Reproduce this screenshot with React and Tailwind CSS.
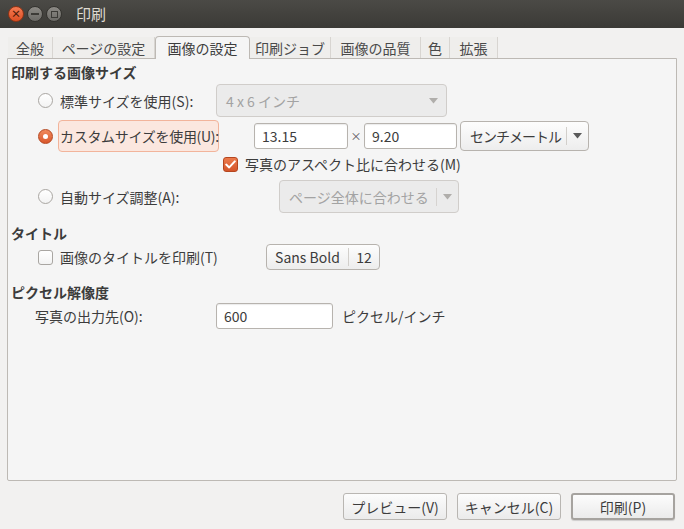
import React from 'react'

const Arrow = ({ dim }) => (
  <svg width="9" height="6" viewBox="0 0 9 6" className="shrink-0">
    <polygon points="0,0 9,0 4.5,5.5" fill={dim ? '#b0aeab' : '#5a5a5a'} />
  </svg>
)

const Radio = ({ checked }) =>
  checked ? (
    <div className="w-[15px] h-[15px] rounded-full border border-[#b5461f] bg-gradient-to-b from-[#f08a5d] to-[#d9572b] flex items-center justify-center shrink-0">
      <div className="w-[5px] h-[5px] rounded-full bg-white" />
    </div>
  ) : (
    <div className="w-[15px] h-[15px] rounded-full border border-[#a9a6a2] bg-gradient-to-b from-white to-[#f3f3f3] shrink-0" />
  )

const Check = ({ checked }) =>
  checked ? (
    <div className="w-[15px] h-[15px] rounded-[3px] border border-[#b5461f] bg-gradient-to-b from-[#ec7a4b] to-[#d4552a] flex items-center justify-center shrink-0">
      <svg width="11" height="9" viewBox="0 0 11 9">
        <path d="M1.2 4.6 L4.2 7.4 L9.8 1.4" stroke="white" strokeWidth="2" fill="none" strokeLinecap="round" strokeLinejoin="round" />
      </svg>
    </div>
  ) : (
    <div className="w-[15px] h-[15px] rounded-[3px] border border-[#a9a6a2] bg-gradient-to-b from-white to-[#f3f3f3] shrink-0" />
  )

const Entry = ({ value, w }) => (
  <div className={`${w} h-full bg-white border border-[#b7b3ae] rounded-[3px] shadow-[inset_0_1px_1px_rgba(0,0,0,0.08)] flex items-center px-[7px]`}>
    {value}
  </div>
)

const Button = ({ label, primary }) => (
  <div
    className={`w-[104px] h-[27px] rounded-[3px] flex items-center justify-center whitespace-nowrap bg-gradient-to-b from-[#fcfcfc] to-[#ebebeb] ${
      primary ? 'border-2 border-[#a6a39f] shadow-[0_1px_1px_rgba(0,0,0,0.15)]' : 'border border-[#b9b6b2]'
    }`}
  >
    {label}
  </div>
)

export default function App() {
  const tabs = [
    { label: '全般', w: 'w-[45px]' },
    { label: 'ページの設定', w: 'w-[102px]' },
    { label: '画像の設定', w: 'w-[95px]', active: true },
    { label: '印刷ジョブ', w: 'w-[81px]' },
    { label: '画像の品質', w: 'w-[90px]' },
    { label: '色', w: 'w-[29px]' },
    { label: '拡張', w: 'w-[48px]' }
  ]

  return (
    <div className="w-[684px] h-[529px] bg-[#f2f1f0] flex flex-col text-[14px] leading-[18px] text-[#3c3c3c] font-['Noto_Sans_CJK_JP',sans-serif] whitespace-nowrap overflow-hidden">
      {/* Title bar */}
      <div className="h-[28px] bg-gradient-to-b from-[#4b4a46] to-[#3b3a36] flex items-center pl-[8px] shrink-0">
        <div className="w-[16px] h-[16px] rounded-full bg-gradient-to-b from-[#f47a52] to-[#dc4f23] border border-[#8f3415] flex items-center justify-center text-[#4a1a08] text-[10px] leading-none font-bold">
          ×
        </div>
        <div className="ml-[3px] w-[16px] h-[16px] rounded-full bg-gradient-to-b from-[#8c8a85] to-[#6b6a66] border border-[#34332f] flex items-center justify-center">
          <div className="w-[8px] h-[2px] bg-[#3c3b37]" />
        </div>
        <div className="ml-[3px] w-[16px] h-[16px] rounded-full bg-gradient-to-b from-[#8c8a85] to-[#6b6a66] border border-[#34332f] flex items-center justify-center">
          <div className="w-[7px] h-[7px] border-[1.5px] border-[#3c3b37]" />
        </div>
        <span className="ml-[14px] text-[#dfdbd2] text-[15px]">印刷</span>
      </div>

      {/* Notebook */}
      <div className="px-[7px] pt-[7px] flex flex-col">
        <div className="flex items-end h-[23px] pl-[1px]">
          {tabs.map((t) =>
            t.active ? (
              <div
                key={t.label}
                className={`${t.w} h-[23px] -mb-px z-10 bg-[#f5f5f5] border border-b-0 border-[#bdb9b4] rounded-t-[4px] flex items-center justify-center`}
              >
                {t.label}
              </div>
            ) : (
              <div
                key={t.label}
                className={`${t.w} h-[21px] border-r border-[#d8d5d1] bg-[#efeeec] flex items-center justify-center text-[#4a4a4a]`}
              >
                {t.label}
              </div>
            )
          )}
        </div>
        <div className="h-[423px] border border-[#bdb9b4] bg-[#f5f5f5] rounded-b-[2px] flex flex-col pl-[3px]">
          {/* 印刷する画像サイズ */}
          <div className="mt-[3px] h-[20px] flex items-center font-bold">印刷する画像サイズ</div>

          <div className="h-[33px] mt-[2px] flex items-center">
            <div className="w-[27px]" />
            <Radio />
            <div className="w-[163px] pl-[7px]">標準サイズを使用(S):</div>
            <div className="w-[231px] h-full rounded-[4px] border border-[#d0cdca] bg-[#ebebeb] flex items-center pl-[9px] pr-[8px] text-[#a3a3a3]">
              <span className="flex-1">4 x 6 インチ</span>
              <Arrow dim />
            </div>
          </div>

          <div className="h-[32px] mt-[3px] flex items-center">
            <div className="w-[27px]" />
            <Radio checked />
            <div className="ml-[5px] w-[161px] h-[32px] rounded-[4px] border border-[#f2b49b] bg-[#fbe7df] flex items-center pl-[1px] tracking-[-0.3px]">
              カスタムサイズを使用(U):
            </div>
            <div className="ml-[35px] h-[26px] flex items-center">
              <Entry value="13.15" w="w-[94px]" />
              <span className="w-[16px] text-center text-[11px] text-[#555]">×</span>
              <Entry value="9.20" w="w-[93px]" />
            </div>
            <div className="ml-[3px] w-[129px] h-[30px] rounded-[4px] border border-[#b7b3ae] bg-gradient-to-b from-[#fdfdfd] to-[#ededed] flex items-center pl-[9px]">
              <span className="w-[96px] tracking-[-1px]">センチメートル</span>
              <div className="w-px h-[18px] bg-[#d2cfcb]" />
              <div className="flex-1 flex justify-center">
                <Arrow />
              </div>
            </div>
          </div>

          <div className="h-[18px] mt-[3px] flex items-center">
            <div className="w-[212px]" />
            <Check checked />
            <span className="ml-[7px]">写真のアスペクト比に合わせる(M)</span>
          </div>

          <div className="h-[33px] mt-[7px] flex items-center">
            <div className="w-[27px]" />
            <Radio />
            <div className="w-[226px] pl-[7px]">自動サイズ調整(A):</div>
            <div className="w-[180px] h-full rounded-[4px] border border-[#d0cdca] bg-[#ebebeb] flex items-center pl-[9px] text-[#a3a3a3]">
              <span className="w-[147px]">ページ全体に合わせる</span>
              <div className="w-px h-[18px] bg-[#d6d3d0]" />
              <div className="flex-1 flex justify-center">
                <Arrow dim />
              </div>
            </div>
          </div>

          {/* タイトル */}
          <div className="mt-[10px] h-[20px] flex items-center font-bold">タイトル</div>

          <div className="h-[26px] mt-[1px] flex items-center">
            <div className="w-[27px]" />
            <Check />
            <div className="w-[213px] pl-[7px]">画像のタイトルを印刷(T)</div>
            <div className="w-[114px] h-full rounded-[4px] border border-[#b7b3ae] bg-gradient-to-b from-[#fdfdfd] to-[#ededed] flex items-center">
              <span className="w-[81px] text-center">Sans Bold</span>
              <div className="w-px h-[18px] bg-[#d2cfcb]" />
              <span className="flex-1 text-center">12</span>
            </div>
          </div>

          {/* ピクセル解像度 */}
          <div className="mt-[12px] h-[20px] flex items-center font-bold">ピクセル解像度</div>

          <div className="h-[26px] mt-[1px] flex items-center">
            <div className="w-[24px]" />
            <span className="w-[181px]">写真の出力先(O):</span>
            <Entry value="600" w="w-[117px]" />
            <span className="ml-[9px]">ピクセル/インチ</span>
          </div>
        </div>
      </div>

      {/* Buttons */}
      <div className="flex justify-end gap-[10px] pr-[9px] mt-[12px]">
        <Button label="プレビュー(V)" />
        <Button label="キャンセル(C)" />
        <Button label="印刷(P)" primary />
      </div>
    </div>
  )
}
